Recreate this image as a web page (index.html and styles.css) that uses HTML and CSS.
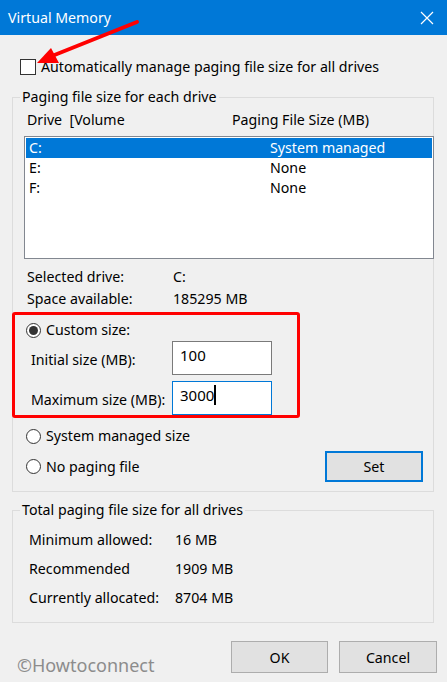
FILE: index.html
```html
<!DOCTYPE html>
<html>
<head>
<meta charset="utf-8">
<link rel="stylesheet" href="styles.css">
</head>
<body>
<div class="window">
  <div class="titlebar">
    <span class="title">Virtual Memory</span>
    <svg class="close" width="14" height="14" viewBox="0 0 14 14"><path d="M1 1 L13 13 M13 1 L1 13" stroke="#fff" stroke-width="1.2" fill="none"/></svg>
  </div>

  <div class="auto-row">
    <span class="checkbox"></span>
    <span class="auto-label">Automatically manage paging file size for all drives</span>
  </div>

  <fieldset class="group group-drives">
    <legend>Paging file size for each drive</legend>
    <div class="list-head">
      <span class="col1">Drive  [Volume</span>
      <span class="col2">Paging File Size (MB)</span>
    </div>
    <div class="listbox">
      <div class="list-row selected"><span class="c1">C:</span><span class="c2">System managed</span></div>
      <div class="list-row"><span class="c1">E:</span><span class="c2">None</span></div>
      <div class="list-row"><span class="c1">F:</span><span class="c2">None</span></div>
    </div>
    <div class="info-row first"><span class="info-label">Selected drive:</span><span>C:</span></div>
    <div class="info-row"><span class="info-label">Space available:</span><span>185295 MB</span></div>

    <div class="radio-row custom"><span class="radio checked"></span><span>Custom size:</span></div>
    <div class="size-row initial"><span class="size-label">Initial size (MB):</span><span class="input">100</span></div>
    <div class="size-row maximum"><span class="size-label">Maximum size (MB):</span><span class="input focused">3000<span class="caret"></span></span></div>
    <div class="radio-row system"><span class="radio"></span><span>System managed size</span></div>
    <div class="radio-row nopage">
      <span class="radio"></span><span class="nopage-label">No paging file</span>
      <span class="btn btn-set">Set</span>
    </div>
  </fieldset>

  <fieldset class="group group-total">
    <legend>Total paging file size for all drives</legend>
    <div class="total-row first"><span class="total-label">Minimum allowed:</span><span>16 MB</span></div>
    <div class="total-row"><span class="total-label">Recommended</span><span>1909 MB</span></div>
    <div class="total-row"><span class="total-label">Currently allocated:</span><span>8704 MB</span></div>
  </fieldset>

  <div class="footer">
    <span class="watermark">©Howtoconnect</span>
    <span class="btn btn-ok">OK</span>
    <span class="btn btn-cancel">Cancel</span>
  </div>

  <div class="highlight"></div>
  <svg class="arrow" width="447" height="100" viewBox="0 0 447 100">
    <line x1="137" y1="22" x2="52" y2="56" stroke="#ff0000" stroke-width="4" stroke-linecap="round"/>
    <polygon points="37,63 51,48 59,63" fill="#ff0000"/>
  </svg>
</div>
</body>
</html>
```
FILE: styles.css
```css
* { box-sizing: border-box; }
html, body { margin: 0; padding: 0; }
body {
  background: #f0f0f0;
  font-family: "Noto Sans", "Liberation Sans", sans-serif;
  font-size: 14.2px;
  color: #000;
}
.window {
  position: relative;
  width: 447px;
  height: 682px;
  overflow: hidden;
  background: #f0f0f0;
}
.titlebar {
  height: 35px;
  background: #0078d7;
  color: #fff;
  display: flex;
  align-items: center;
  justify-content: space-between;
  padding: 0 13px 0 8px;
  font-size: 14.2px;
}
.title { line-height: 20px; }
.close { display: block; margin-top: 0; }

.auto-row {
  margin-top: 22px;
  height: 20px;
  display: flex;
  align-items: center;
  padding-left: 20px;
  line-height: 20px;
}
.checkbox {
  width: 16px;
  height: 16px;
  border: 1px solid #333;
  background: #fff;
  margin-right: 5px;
}

.group {
  margin: 0 13px 0 12px;
  padding: 0;
  border: 1px solid #dcdcdc;
  min-inline-size: 0;
}
.group legend {
  padding: 0 2px;
  margin-left: 7px;
  line-height: 20px;
  height: 20px;
}
.group-drives { margin-top: 10px; padding-bottom: 9px; }

.list-head {
  margin-top: 3px;
  height: 20px;
  line-height: 20px;
  display: flex;
  padding-left: 14px;
  white-space: pre;
}
.list-head .col1 { width: 205px; }

.listbox {
  margin: 6px -1px 0 11px;
  height: 123px;
  border: 1px solid #828790;
  background: #fff;
  padding: 1px;
}
.list-row {
  height: 20px;
  line-height: 20px;
  display: flex;
  padding-left: 3px;
}
.list-row.selected { background: #0078d7; color: #fff; }
.list-row .c1 { width: 241px; }

.info-row {
  height: 20px;
  line-height: 20px;
  display: flex;
  padding-left: 14px;
  margin-top: 2px;
}
.info-row.first { margin-top: 8px; }
.info-label { width: 146px; }

.radio-row {
  height: 20px;
  line-height: 20px;
  display: flex;
  align-items: center;
  padding-left: 13px;
}
.radio {
  width: 15px;
  height: 15px;
  border: 1px solid #333;
  border-radius: 50%;
  background: #fff;
  margin-right: 5px;
  display: flex;
  align-items: center;
  justify-content: center;
  flex: none;
}
.radio.checked::after {
  content: "";
  width: 9px;
  height: 9px;
  border-radius: 50%;
  background: #333;
}
.radio-row.custom { margin-top: 11px; }
.radio-row.system { margin-top: 11px; }
.radio-row.nopage { margin-top: 5px; height: 31px; }
.nopage-label { flex: 1; }

.size-row {
  display: flex;
  align-items: center;
  padding-left: 18px;
  height: 34px;
}
.size-row.initial { margin-top: 1px; }
.size-row.maximum { margin-top: 6px; }
.size-label { width: 141px; padding-top: 2px; }
.input {
  width: 100px;
  height: 34px;
  border: 1px solid #7a7a7a;
  background: #fff;
  padding: 3px 0 0 7px;
  line-height: 20px;
  font-size: 15px;
  display: flex;
  align-items: flex-start;
}
.input.focused { border-color: #0078d7; }
.caret {
  display: inline-block;
  width: 2px;
  height: 20px;
  background: #000;
  margin-left: 0;
}

.btn {
  display: flex;
  align-items: center;
  justify-content: center;
  background: #e1e1e1;
  border: 1px solid #adadad;
  height: 32px;
  width: 97px;
}
.btn-set {
  width: 98px;
  height: 31px;
  border: 2px solid #0078d7;
  margin-right: 10px;
}

.group-total { margin-top: 8px; padding-bottom: 14px; }
.total-row {
  height: 20px;
  line-height: 20px;
  display: flex;
  padding-left: 16px;
  margin-top: 9px;
}
.total-row.first { margin-top: 10px; }
.total-label { width: 146px; }

.footer {
  margin-top: 18px;
  display: flex;
  align-items: center;
  height: 32px;
}
.watermark {
  margin-left: 17px;
  width: 214px;
  font-size: 18px;
  color: #8c8c8c;
  padding-top: 15px;
}
.btn-cancel { margin-left: 11px; width: 98px; }

.highlight {
  position: absolute;
  left: 12px;
  top: 312px;
  width: 288px;
  height: 106px;
  border: 3px solid #ff0000;
  border-radius: 3px;
}
.arrow {
  position: absolute;
  left: 0;
  top: 0;
}
```
